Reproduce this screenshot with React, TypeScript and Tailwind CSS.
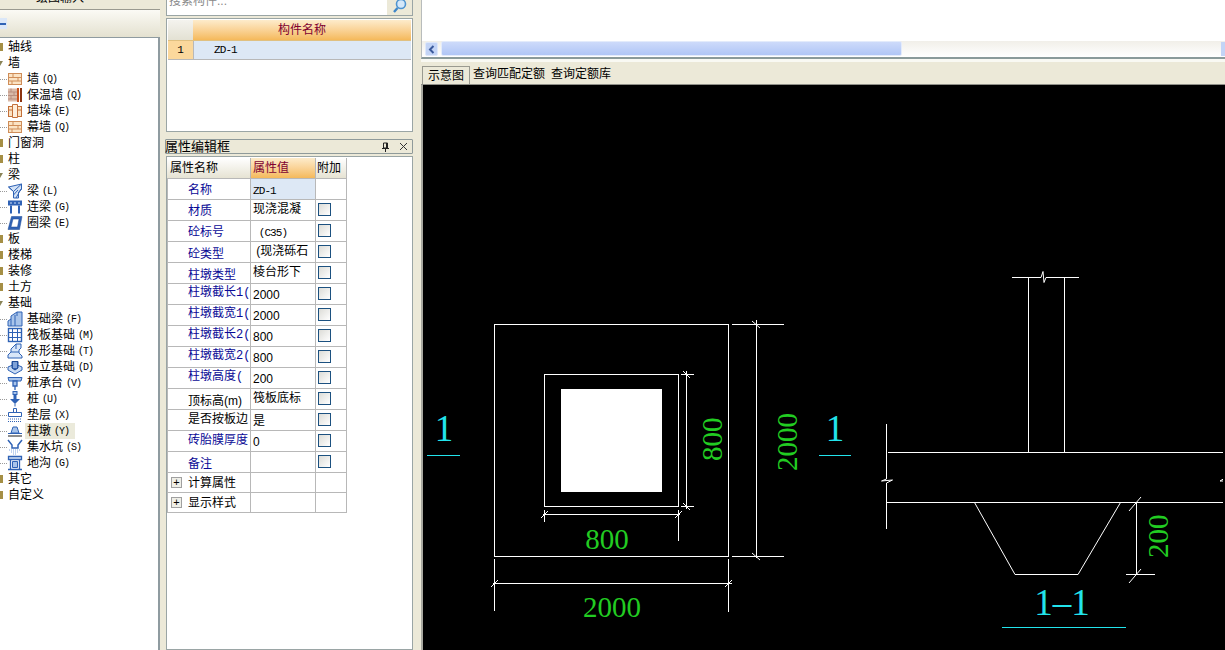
import type { ReactNode } from "react";

const B = "#2f62b5";
const L = "#a9c4ea";

function Brick() {
  return (
    <>
      <rect x="1.5" y="2.5" width="13" height="11" fill="#fbe3c4" stroke="#cf8d58" />
      <path d="M1.5 6.5h13M1.5 10h13M6 2.5v4M11 6.5V10M5 10v3.5" stroke="#cf8d58" fill="none" />
    </>
  );
}

const icons: Record<string, ReactNode> = {
  brick: <Brick />,
  insulate: (
    <>
      <rect x="1" y="1.5" width="9" height="13" fill="#d9b9a8" />
      <path d="M1 5h9M1 8.5h9M1 12h9M4 1.5V5M7 5v3.5M4 8.5V12" stroke="#b98e80" fill="none" />
      <rect x="10" y="1" width="2" height="14" fill="#c8501c" />
      <rect x="13" y="1" width="2" height="14" fill="#8c3410" />
    </>
  ),
  pier: (
    <>
      <rect x="1.5" y="3.5" width="13" height="10" fill="#fbe3c4" stroke="#c4703a" />
      <path d="M5.5 1.5h5v13h-5zM5.5 7h-4M10.5 7h4" fill="#fdeedd" stroke="#c4703a" />
    </>
  ),
  beam: (
    <>
      <path d="M1.5 4 14.5 1v5.5L11.5 9v6h-5V8.5z" fill="#d3e2f6" stroke={B} />
      <path d="M1.5 4 6.5 8.5M6.5 8.5l8-7.5M9 15l5-9M6.5 12 11 7" stroke={B} fill="none" />
    </>
  ),
  link: (
    <>
      <rect x="1" y="1.5" width="14" height="5" fill={B} />
      <path d="M3 4h2M7 4h2M11 4h2" stroke="#cfe0f8" />
      <path d="M4 6.5v8M12 6.5v8" stroke={B} strokeWidth="2" />
    </>
  ),
  ring: (
    <path d="M4.5 1.5H15l-2.5 13H1z M6 4 4 12h6.5L12 4z" fill={B} fillRule="evenodd" stroke="#1e4a94" strokeWidth="0.5" />
  ),
  fbeam: (
    <>
      <path d="M1 15v-5l3-2V5l6-4h5v14z" fill={L} stroke={B} />
      <path d="M4 8v7M8 4v11M10 1v4" stroke={B} fill="none" />
    </>
  ),
  raft: (
    <>
      <rect x="1.5" y="1.5" width="13" height="13" fill="#fff" stroke={B} strokeWidth="1.4" />
      <path d="M1.5 5.5h13M1.5 10.5h13M5.5 1.5v13M10.5 1.5v13" stroke={B} />
    </>
  ),
  strip: (
    <>
      <path d="M1 15v-3l3-3V6l5-5h5v4l-2 2v3l3 3v2z" fill="#d9e6f8" stroke={B} />
      <path d="M4 9h8M9 1v5" stroke={B} fill="none" />
    </>
  ),
  isolated: (
    <>
      <path d="M1 8l7-3 7 3v3l-7 4-7-4z" fill="#c9dbf4" stroke={B} />
      <path d="M5 2.5h6V9l-3 2-3-2z" fill={B} stroke="#1e4a94" />
      <path d="M7 3v6M9 3v6" stroke="#cfe0f8" />
    </>
  ),
  cap: (
    <>
      <path d="M1 2.5h14l-1 3.5H2z" fill={L} stroke={B} />
      <path d="M6 6h4v5H6zM8 11v4" fill={L} stroke={B} strokeWidth="1.3" />
    </>
  ),
  pile: (
    <>
      <rect x="6" y="0.5" width="4" height="3" fill={L} stroke={B} />
      <path d="M6.5 3.5h3V8H13L8 13 3 8h3.5z" fill={B} />
      <path d="M8 13v2.5" stroke={B} />
    </>
  ),
  cushion: (
    <>
      <path d="M6.5 1.5h3v4h-3zM1.5 5.5h13v4h-13z" fill="#fff" stroke={B} />
      <path d="M1 12h14M1 14.5h14" stroke={B} strokeDasharray="1 1" />
    </>
  ),
  pad: (
    <>
      <path d="M6 4h4l2 6H4z" fill={L} stroke={B} />
      <path d="M1 10.5h14" stroke={B} />
      <rect x="1" y="12" width="14" height="2" fill="#8d8d8d" />
    </>
  ),
  sump: (
    <>
      <path d="M1 1l4 5v3h6V6l4-5" fill="none" stroke={B} strokeWidth="1.5" />
      <path d="M2 11h12M4 13h8M6 15h4" stroke={L} strokeWidth="1.6" strokeDasharray="1 1" />
    </>
  ),
  ditch: (
    <>
      <path d="M1.5 1.5h13v3h-13zM3.5 4.5v10M12.5 4.5v10M1 14.5h14" fill="#d9e6f8" stroke={B} strokeWidth="1.3" />
      <path d="M5.5 6.5h5v6h-5z" fill={L} stroke={B} />
    </>
  ),
};

type TreeRow = { label: string; key?: string; icon?: string; open?: boolean; active?: boolean };

const tree: TreeRow[] = [
  { label: "轴线" },
  { label: "墙", open: true },
  { label: "墙", key: "(Q)", icon: "brick" },
  { label: "保温墙", key: "(Q)", icon: "insulate" },
  { label: "墙垛", key: "(E)", icon: "pier" },
  { label: "幕墙", key: "(Q)", icon: "brick" },
  { label: "门窗洞" },
  { label: "柱" },
  { label: "梁", open: true },
  { label: "梁", key: "(L)", icon: "beam" },
  { label: "连梁", key: "(G)", icon: "link" },
  { label: "圈梁", key: "(E)", icon: "ring" },
  { label: "板" },
  { label: "楼梯" },
  { label: "装修" },
  { label: "土方" },
  { label: "基础", open: true },
  { label: "基础梁", key: "(F)", icon: "fbeam" },
  { label: "筏板基础", key: "(M)", icon: "raft" },
  { label: "条形基础", key: "(T)", icon: "strip" },
  { label: "独立基础", key: "(D)", icon: "isolated" },
  { label: "桩承台", key: "(V)", icon: "cap" },
  { label: "桩", key: "(U)", icon: "pile" },
  { label: "垫层", key: "(X)", icon: "cushion" },
  { label: "柱墩", key: "(Y)", icon: "pad", active: true },
  { label: "集水坑", key: "(S)", icon: "sump" },
  { label: "地沟", key: "(G)", icon: "ditch" },
  { label: "其它" },
  { label: "自定义" },
];

function Tree() {
  return (
    <div className="flex-1 bg-white border-t border-r-2 border-[#8f9ba0] pt-px">
      {tree.map((row, i) =>
        row.icon ? (
          <div key={i} className="h-4 flex items-center">
            <div className="w-[7px] border-t border-dotted border-[#9a9a9a]" />
            <svg width="16" height="16" viewBox="0 0 16 16" className="shrink-0">
              {icons[row.icon]}
            </svg>
            <div className={`ml-[2px] pl-[2px] pr-[6px] h-4 flex items-center text-[12px] ${row.active ? "bg-[#ebeadb]" : ""}`}>
              {row.label}
              <span className="ml-[3px] font-['Liberation_Mono',monospace] text-[10px] tracking-[-1px]">{row.key}</span>
            </div>
          </div>
        ) : (
          <div key={i} className="h-4 flex items-center">
            {row.open ? (
              <div className="w-0 h-0 border-t-[5px] border-t-[#8a8458] border-r-[3px] border-r-transparent" />
            ) : (
              <div className="w-[3px] h-[8px] bg-[#a58f45]" />
            )}
            <span className="text-[12px] ml-[5px]">{row.label}</span>
          </div>
        )
      )}
    </div>
  );
}

type PropRow = { name: string; value?: string; black?: boolean; namePad: string; valuePad: string; mono?: boolean; cut?: boolean };

const props: PropRow[] = [
  { name: "名称", value: "ZD-1", namePad: "pt-[3px]", valuePad: "pt-[3px]", mono: true },
  { name: "材质", value: "现浇混凝", namePad: "pt-[3px]", valuePad: "pt-px" },
  { name: "砼标号", value: " (C35)", namePad: "pt-[3px]", valuePad: "pt-[3px]", mono: true },
  { name: "砼类型", value: " (现浇砾石", namePad: "pt-1", valuePad: "pt-px" },
  { name: "柱墩类型", value: "棱台形下", namePad: "pt-1", valuePad: "pt-px" },
  { name: "柱墩截长1(", value: "2000", namePad: "pt-px", valuePad: "pt-[3px]", cut: true },
  { name: "柱墩截宽1(", value: "2000", namePad: "pt-px", valuePad: "pt-[3px]", cut: true },
  { name: "柱墩截长2(", value: "800", namePad: "pt-px", valuePad: "pt-[3px]", cut: true },
  { name: "柱墩截宽2(", value: "800", namePad: "pt-px", valuePad: "pt-[3px]", cut: true },
  { name: "柱墩高度(", value: "200", namePad: "pt-px", valuePad: "pt-[3px]", cut: true },
  { name: "顶标高(m)", value: "筏板底标", black: true, namePad: "pt-1", valuePad: "pt-px" },
  { name: "是否按板边", value: "是", black: true, namePad: "pt-px", valuePad: "pt-[3px]" },
  { name: "砖胎膜厚度", value: "0", namePad: "pt-px", valuePad: "pt-[3px]" },
  { name: "备注", value: "", namePad: "pt-1", valuePad: "pt-[3px]" },
];

function Checkbox() {
  return <div className="w-[13px] h-[13px] border border-[#1c5180] bg-gradient-to-br from-[#dcdcd7] to-white" />;
}

function PropTable() {
  return (
    <div className="w-[180px] text-[12px] leading-4">
      <div className="flex h-[21px] border-b border-[#b8b8b8]">
        <div className="w-[84px] pl-[3px] pt-[2px] border-r border-[#b8b8b8] bg-gradient-to-b from-white to-[#e6e3d3]">属性名称</div>
        <div className="w-[65px] pl-[2px] pt-[2px] text-[#800030] border-r border-[#b8b8b8] bg-gradient-to-b from-[#fdeccb] to-[#f5b95a]">属性值</div>
        <div className="w-[31px] pl-px pt-[2px] border-r border-[#b8b8b8] bg-gradient-to-b from-white to-[#e6e3d3]">附加</div>
      </div>
      {props.map((row, i) => (
        <div key={row.name} className="flex h-[21px] border-b border-[#b8b8b8]">
          <div
            className={`w-[84px] pl-[20px] border-r border-l border-[#b8b8b8] overflow-hidden whitespace-nowrap ${row.namePad} ${row.black ? "text-black" : "text-[#0a0a96]"} ${row.cut ? "font-['Liberation_Mono','Noto_Sans_CJK_SC',monospace]" : ""}`}
          >
            {row.name}
          </div>
          <div className={`w-[65px] pl-[2px] border-r border-[#b8b8b8] overflow-hidden whitespace-pre ${row.valuePad} ${i === 0 ? "bg-[#dde8f5]" : ""}`}>
            {row.mono ? (
              <span className="font-['Liberation_Mono',monospace] text-[11px] tracking-[-0.9px]">{row.value}</span>
            ) : (
              row.value
            )}
          </div>
          <div className="w-[31px] pl-[2px] pt-[3px] border-r border-[#b8b8b8]">{i > 0 && <Checkbox />}</div>
        </div>
      ))}
      {["计算属性", "显示样式"].map((name) => (
        <div key={name} className="flex h-[20px] border-b border-[#b8b8b8]">
          <div className="w-[84px] pl-[3px] flex items-center gap-[6px] border-r border-l border-[#b8b8b8]">
            <div className="w-[11px] h-[11px] border border-[#a0a0a0] bg-[#efefe8] flex items-center justify-center text-[11px] leading-none">+</div>
            {name}
          </div>
          <div className="w-[65px] border-r border-[#b8b8b8]" />
          <div className="w-[31px] border-r border-[#b8b8b8]" />
        </div>
      ))}
    </div>
  );
}

function Drawing() {
  const green = "#22cc22";
  const cyan = "#22e4ec";
  const serif = "'Liberation Serif', serif";
  return (
    <svg viewBox="423 85 800 565" width="800" height="565" className="block" fill="none" stroke="#fff">
      {/* plan */}
      <rect x="494.5" y="324.5" width="234" height="232" />
      <rect x="544.5" y="374.5" width="134" height="132" />
      <rect x="561" y="389" width="101" height="103" fill="#fff" stroke="none" />
      <path d="M756.5 320V558M732 324.5h52M732 556.5h52M752 321l8 7M752 553l8 7" />
      <path d="M686.5 371V509M681 374.5h13M681 506.5h13M683 371l7 7M683 503l7 7" />
      <path d="M543 514.5H680M544.5 510v12M678.5 510v31M541 518l7-7M675 518l7-7" />
      <path d="M493 583.5H732M494.5 559v52M728.5 559v53M491 587l7-7M725 587l7-7" />
      <g fill={green} stroke="none" fontFamily={serif} fontSize="29">
        <text x="607" y="549" textAnchor="middle">800</text>
        <text x="612" y="617" textAnchor="middle">2000</text>
        <text transform="translate(722 461) rotate(-90)">800</text>
        <text transform="translate(796.5 471) rotate(-90)">2000</text>
        <text transform="translate(1168 558) rotate(-90)">200</text>
      </g>
      {/* section */}
      <path d="M1028.5 277.5V452M1064.5 277.5V452M1012 277.5h29l2-6 1 11 2-5h33" />
      <path d="M888 452.5H1225M886.5 502.5H1225" />
      <path d="M886.5 424v55l-5 2 11-1-6 3v46M1225 478l-5 3h5" />
      <path d="M974.5 502.5 1015 574.5H1078L1120.5 502.5" />
      <path d="M1136.5 502v72M1129 511l12-14M1129 583l12-14M1126 574.5h29" />
      <g fill={cyan} stroke="none" fontFamily={serif} fontSize="37">
        <text x="444" y="441" textAnchor="middle">1</text>
        <text x="835" y="441" textAnchor="middle">1</text>
        <text x="1062" y="615" textAnchor="middle">1–1</text>
      </g>
      <path stroke={cyan} d="M427 455.5h33M819 455.5h32M1002 627.5h124" />
    </svg>
  );
}

export default function App() {
  return (
    <div className="w-[1225px] h-[650px] overflow-hidden flex bg-[#ece9d8] text-black font-['Liberation_Sans','Noto_Sans_CJK_SC',sans-serif] text-[12px]">
      {/* left tree */}
      <div className="w-[160px] h-full shrink-0 flex flex-col">
        <div className="h-[10px] border-b border-[#9a9a90] overflow-hidden">
          <div className="-mt-[10px] text-center pr-[40px] leading-4">绘图输入</div>
        </div>
        <div className="h-[27px] bg-gradient-to-b from-[#fbfaf5] to-[#e4e1d0] flex items-center">
          <div className="w-[7px] h-[11px] bg-[#dbe7f8] flex items-center">
            <div className="w-[6px] h-[2px] bg-[#2f62b5]" />
          </div>
        </div>
        <Tree />
      </div>

      {/* middle */}
      <div className="w-[247px] h-full ml-[6px] shrink-0 flex flex-col">
        <div className="h-[16px] flex border border-t-0 border-[#9aa5a5] bg-white overflow-hidden">
          <div className="flex-1 pl-[2px] -mt-[7px] leading-4 text-[#8a8a8a]">搜索构件...</div>
          <div className="w-[25px] bg-[#ece9d8] flex justify-center">
            <svg width="16" height="14" viewBox="0 0 16 14" fill="none">
              <circle cx="9" cy="4" r="4.5" fill="#d4e8fa" stroke="#4f94d0" strokeWidth="1.6" />
              <path d="M5.5 8 2 12" stroke="#3f86c8" strokeWidth="2.4" />
            </svg>
          </div>
        </div>
        <div className="h-[114px] mt-[2px] border border-[#9aa5a5] bg-white px-px pt-px">
          <div className="flex h-[21px] border-b border-[#e0c080]">
            <div className="w-[25px] bg-gradient-to-b from-[#f4f3ee] to-[#e3e1d3]" />
            <div className="flex-1 text-center leading-[20px] text-[#800030] bg-gradient-to-b from-[#fdeccb] to-[#f5b95a]">构件名称</div>
          </div>
          <div className="flex h-[19px] leading-[18px]">
            <div className="w-[25px] text-center font-['Liberation_Mono',monospace] text-[11px] bg-[#fbd89c] border-b border-[#b8b8b8]">1</div>
            <div className="flex-1 pl-[20px] font-['Liberation_Mono',monospace] text-[11px] tracking-[-0.9px] bg-[#dde8f5] border-l border-b border-[#b8b8b8]">ZD-1</div>
          </div>
        </div>
        <div className="h-[15px] mt-[7px] -ml-px flex items-center border border-[#8f9a9a] rounded-[1px] text-[13px] leading-none">
          <span className="flex-1 -ml-px">属性编辑框</span>
          <svg width="9" height="10" viewBox="0 0 9 10" className="mr-[9px]" fill="none" stroke="#222">
            <path d="M2.5 1h4v5h-4zM1 6.5h7M4.5 6.5V10M5.5 1v5" />
          </svg>
          <svg width="9" height="9" viewBox="0 0 9 9" className="mr-[4px]" fill="none" stroke="#333">
            <path d="M1 1l7 7M8 1 1 8" />
          </svg>
        </div>
        <div className="flex-1 mt-[2px] border border-[#9aa5a5] bg-white pt-px">
          <PropTable />
        </div>
      </div>

      {/* right */}
      <div className="flex-1 ml-[8px] flex flex-col min-w-0">
        <div className="h-[59px] border-b-2 border-[#8a9a9a] border-l border-l-[#b8bcbc] bg-white flex flex-col">
          <div className="h-[41px]" />
          <div className="h-[16px] flex pl-[3px] bg-gradient-to-b from-[#f1efe9] to-white">
            <div className="w-[13px] h-[14px] mt-px rounded-[2px] bg-[#c3d4f6] border border-[#dfe8fa] flex items-center justify-center">
              <svg width="7" height="9" viewBox="0 0 7 9" fill="none" stroke="#3b5a9c" strokeWidth="2">
                <path d="M5.5 1 2 4.5 5.5 8" />
              </svg>
            </div>
            <div className="w-[461px] ml-[3px] h-[15px] rounded-[2px] bg-gradient-to-b from-[#cddafa] to-[#b0c6f6] border border-[#e3ebfb]" />
            <div className="flex-1" />
            <div className="w-[4px] h-[14px] mt-px bg-[#c3d4f6]" />
          </div>
        </div>
        <div className="h-[3px] bg-white/70" />
        <div className="h-[23px] flex items-end pl-[1px] border-b border-[#8f8f88]">
          <div className="w-[48px] h-[18px] text-center leading-[18px] border border-b-0 border-[#9a9a90]">示意图</div>
          <div className="h-[18px] ml-[3px] leading-[16px]">查询匹配定额</div>
          <div className="h-[18px] ml-[6px] leading-[16px]">查询定额库</div>
        </div>
        <div className="flex-1 border-l-2 border-[#a8a8a0] bg-black overflow-hidden">
          <Drawing />
        </div>
      </div>
    </div>
  );
}
